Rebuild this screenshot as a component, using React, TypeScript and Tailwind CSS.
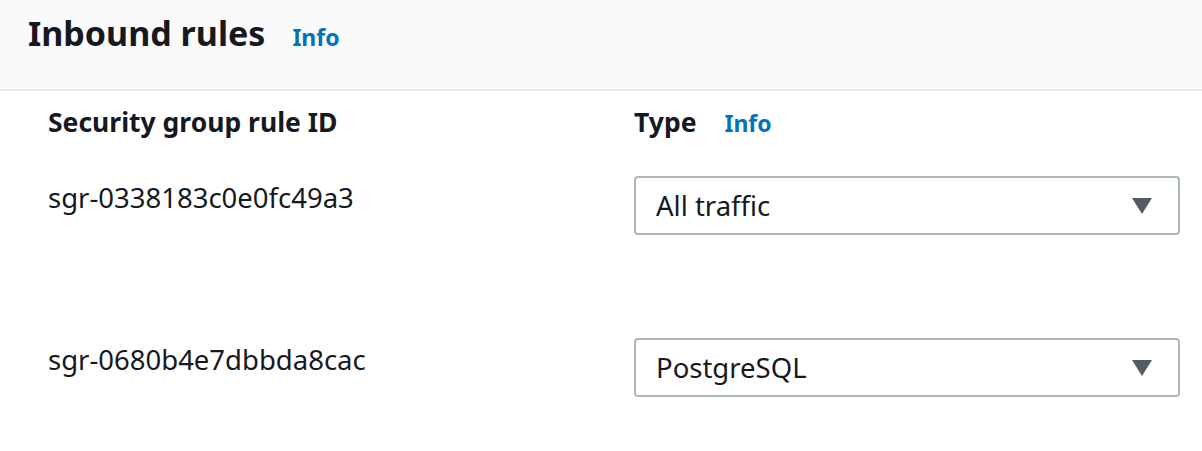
import React from 'react';

const RULES = [
  { id: 'sgr-0338183c0e0fc49a3', type: 'All traffic' },
  { id: 'sgr-0680b4e7dbbda8cac', type: 'PostgreSQL' },
];

const Caret = () => (
  <svg width="20" height="16" viewBox="0 0 20 16" className="shrink-0">
    <path d="M0 0 H20 L10 16 Z" fill="#545b64" />
  </svg>
);

export default function App() {
  return (
    <div className="w-[1202px] h-[451px] overflow-hidden bg-white text-[#16191f] font-['Noto_Sans',sans-serif]">
      <header className="h-[91px] bg-[#fafafa] border-b-2 border-[#eaeded] pl-[28px] pt-[12px] flex items-baseline gap-[27px]">
        <h2 className="text-[34px] font-bold leading-[42px]">Inbound rules</h2>
        <a className="text-[23px] font-bold text-[#0073bb]">Info</a>
      </header>

      <div className="grid grid-cols-[586px_546px] pl-[48px]">
        <div className="pt-[14px] h-[85px] text-[26.5px] font-bold leading-[34px]">Security group rule ID</div>
        <div className="pt-[14px] h-[85px] flex items-baseline gap-[28px]">
          <span className="text-[26.5px] font-bold leading-[34px]">Type</span>
          <a className="text-[23px] font-bold text-[#0073bb]">Info</a>
        </div>

        {RULES.map((r) => (
          <React.Fragment key={r.id}>
            <div className="h-[162px] pt-[4px] text-[27.5px] leading-[36px]">{r.id}</div>
            <div className="h-[162px]">
              <div className="h-[59px] border-2 border-[#aab7b8] rounded-[4px] bg-white flex items-center justify-between pl-[20px] pr-[26px]">
                <span className="text-[27.5px] leading-[36px]">{r.type}</span>
                <Caret />
              </div>
            </div>
          </React.Fragment>
        ))}
      </div>
    </div>
  );
}
